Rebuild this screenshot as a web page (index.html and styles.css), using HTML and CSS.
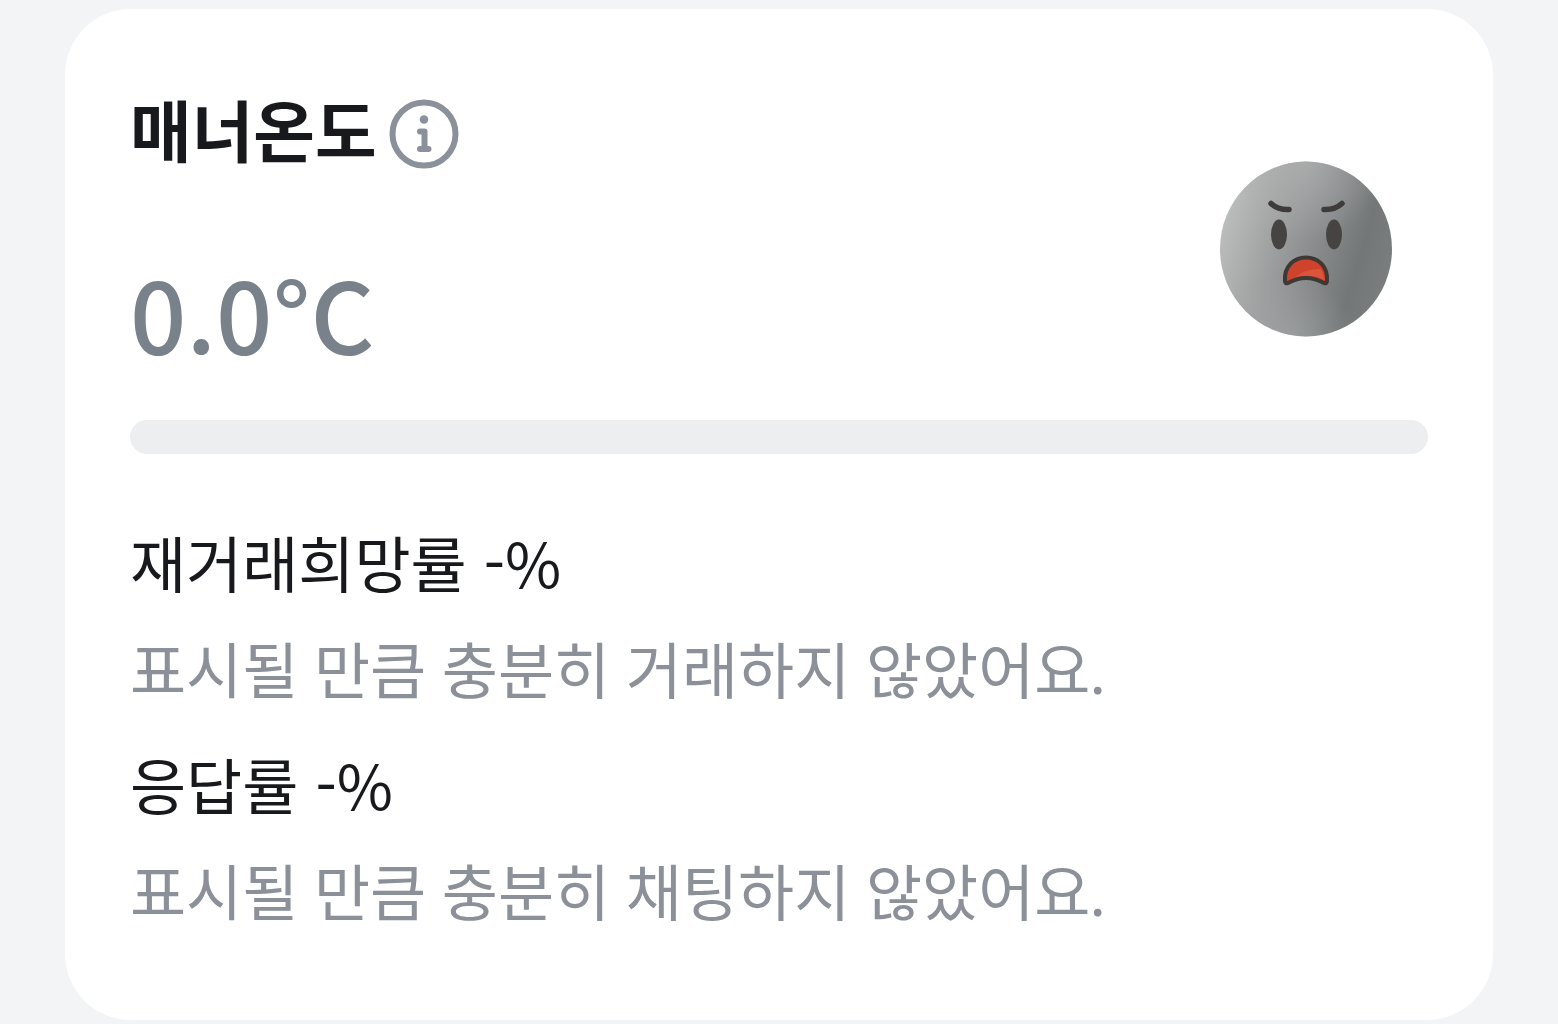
FILE: index.html
```html
<!DOCTYPE html>
<html lang="ko">
<head>
<meta charset="utf-8">
<meta name="viewport" content="width=device-width, initial-scale=1">
<title>매너온도</title>
<link rel="stylesheet" href="styles.css">
</head>
<body>
<main class="card">
  <section class="summary">
    <div class="reading">
      <div class="heading">
        <h1 class="title">매너온도</h1>
        <button class="info" type="button" aria-label="매너온도 안내">
          <svg viewBox="0 0 70 70" aria-hidden="true"><circle cx="35" cy="35" r="31.5" fill="none" stroke="#8a919b" stroke-width="6"/><circle cx="35" cy="20.5" r="4.3" fill="#8a919b"/><path d="M31 32.500H35.500V50M31 50H39.500" fill="none" stroke="#8a919b" stroke-width="6" stroke-linecap="round" stroke-linejoin="round"/></svg>
        </button>
      </div>
      <p class="temperature">0.0°C</p>
    </div>
    <svg class="face" viewBox="0 0 174 176" role="img" aria-label="화난 얼굴">
      <defs>
        <linearGradient id="shade" x1="0" y1="0.35" x2="1" y2="0.65">
          <stop offset="0" stop-color="#bdbebe"/><stop offset=".25" stop-color="#a5a7a7"/><stop offset=".5" stop-color="#8d8f90"/><stop offset=".8" stop-color="#747778"/><stop offset="1" stop-color="#7b7e7f"/>
        </linearGradient>
        <radialGradient id="light" cx=".5" cy="0" r=".45">
          <stop offset="0" stop-color="#b0b3b2" stop-opacity=".65"/><stop offset="1" stop-color="#b0b3b2" stop-opacity="0"/>
        </radialGradient>
        <radialGradient id="glow" cx=".4" cy="1.05" r=".4">
          <stop offset="0" stop-color="#b0b3b3" stop-opacity=".5"/><stop offset="1" stop-color="#b0b3b3" stop-opacity="0"/>
        </radialGradient>
      </defs>
      <ellipse cx="86" cy="88" rx="86" ry="87.500" fill="url(#shade)"/>
      <ellipse cx="86" cy="88" rx="86" ry="87.500" fill="url(#light)"/>
      <ellipse cx="86" cy="88" rx="86" ry="87.500" fill="url(#glow)"/>
      <path d="M51 42.500Q58 49 69 48.500M104 48.500Q115 49 122 42.500" fill="none" stroke="#3e3c3a" stroke-width="5.500" stroke-linecap="round"/>
      <ellipse cx="59" cy="73.500" rx="8" ry="15" fill="#454442"/>
      <ellipse cx="114" cy="73.500" rx="8" ry="15" fill="#454442"/>
      <path d="M65 120C64 105 74 96.500 86 96.500S108 105 107 120Q107 123 104 122Q86 112 68 122Q65 123 65 120Z" fill="#cf432d"/>
      <path d="M74 118Q82 108 101 108L105 119Q87 111 74 118Z" fill="#da553b"/>
      <path d="M65 120C64 105 74 96.500 86 96.500S108 105 107 120Q107 123 104 122Q86 112 68 122Q65 123 65 120Z" fill="none" stroke="#3e3935" stroke-width="4" stroke-linejoin="round"/>
    </svg>
  </section>
  <div class="meter" role="progressbar" aria-label="매너온도" aria-valuemin="0" aria-valuemax="100" aria-valuenow="0"></div>
  <dl class="stats">
    <dt>재거래희망률 -%</dt>
    <dd>표시될 만큼 충분히 거래하지 않았어요.</dd>
    <dt>응답률 -%</dt>
    <dd>표시될 만큼 충분히 채팅하지 않았어요.</dd>
  </dl>
</main>
</body>
</html>
```
FILE: styles.css
```css
* { box-sizing: border-box; }
body {
  margin: 0;
  padding: 9px 65px 4px;
  background: #f2f4f6;
  color: #18191c;
  font-family: "Noto Sans CJK KR", sans-serif;
}
.card { padding: 77px 65px 79px; border-radius: 66px; background: #fff; }
.summary { display: flex; justify-content: space-between; align-items: flex-end; }
.heading { display: flex; align-items: center; gap: 12px; }
.title { margin: 0; padding-bottom: 12px; font-size: 67px; line-height: 84px; font-weight: 700; }
.info { width: 70px; height: 70px; padding: 0; border: 0; background: none; }
.info svg { display: block; width: 100%; height: 100%; }
.temperature { margin: 66px 0 0; color: #79818b; font-size: 99px; line-height: 128px; font-weight: 500; }
.face { width: 174px; height: 176px; margin: 0 34px 39px 0; }
.meter { height: 34px; margin-top: 44px; border-radius: 17px; background: #eceef0; }
.stats { margin: 60px 0 0; font-size: 61px; line-height: 96px; }
.stats dt { margin: 0; }
.stats dd { margin: 13px 0 17px; color: #8b9099; font-family: Lato, "Noto Sans CJK KR", sans-serif; }
.stats dd:last-child { margin-bottom: 0; }
```
